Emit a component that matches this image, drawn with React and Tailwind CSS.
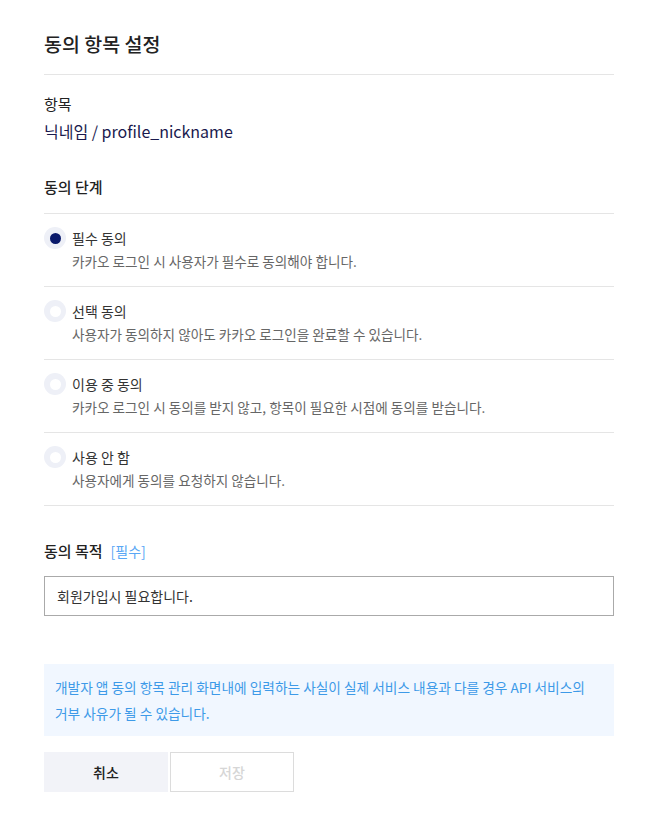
import React, { useState } from 'react';

const OPTIONS = [
  { key: 'required', label: '필수 동의', desc: '카카오 로그인 시 사용자가 필수로 동의해야 합니다.' },
  { key: 'optional', label: '선택 동의', desc: '사용자가 동의하지 않아도 카카오 로그인을 완료할 수 있습니다.' },
  { key: 'inuse', label: '이용 중 동의', desc: '카카오 로그인 시 동의를 받지 않고, 항목이 필요한 시점에 동의를 받습니다.' },
  { key: 'none', label: '사용 안 함', desc: '사용자에게 동의를 요청하지 않습니다.' },
];

function Radio({ checked }) {
  return (
    <span className="flex h-[22px] w-[22px] shrink-0 items-center justify-center rounded-full bg-[#eef0f7]">
      <span className={checked ? 'h-[11px] w-[11px] rounded-full bg-[#0a1a6b]' : 'h-[11px] w-[11px] rounded-full bg-white'} />
    </span>
  );
}

export default function App() {
  const [level, setLevel] = useState('required');
  const [purpose, setPurpose] = useState('회원가입시 필요합니다.');

  return (
    <div className="min-h-[836px] bg-white pl-[44px] pr-[46px] pt-[30px] text-[#222] font-['Noto_Sans_CJK_KR','Noto_Sans',sans-serif]">
      {/* Header */}
      <h1 className="text-[19.5px] font-medium leading-[28px] pb-[16px] border-b border-[#e5e5e5]">동의 항목 설정</h1>

      {/* Item */}
      <div className="pt-[18px]">
        <div className="text-[15px] leading-[22px]">항목</div>
        <div className="mt-[5px] text-[16px] leading-[22px] text-[#1a1a4e]">닉네임 / profile_nickname</div>
      </div>

      {/* Consent level */}
      <div className="mt-[34px] text-[15px] font-medium leading-[22px] pb-[15px] border-b border-[#e5e5e5]">동의 단계</div>
      <div>
        {OPTIONS.map((o) => (
          <label
            key={o.key}
            onClick={() => setLevel(o.key)}
            className="flex h-[73px] cursor-pointer gap-[6px] border-b border-[#e5e5e5] pt-[13px]"
          >
            <Radio checked={level === o.key} />
            <div>
              <div className="text-[14px] leading-[22px] text-[#333]">{o.label}</div>
              <div className="mt-[2px] text-[13.6px] leading-[20px] text-[#666]">{o.desc}</div>
            </div>
          </label>
        ))}
      </div>

      {/* Purpose */}
      <div className="mt-[34px] flex items-center gap-[8px] leading-[22px]">
        <span className="text-[15px] font-medium">동의 목적</span>
        <span className="text-[14px] text-[#5aa7f5]">[필수]</span>
      </div>
      <input
        value={purpose}
        onChange={(e) => setPurpose(e.target.value)}
        className="mt-[14px] h-[40px] w-full border border-[#aaa] px-[12px] text-[14px] text-[#333] outline-none"
      />

      {/* Notice */}
      <div className="mt-[48px] bg-[#f1f7ff] px-[11px] py-[10px] text-[13.7px] leading-[26px] text-[#3d9ae8]">
        개발자 앱 동의 항목 관리 화면내에 입력하는 사실이 실제 서비스 내용과 다를 경우 API 서비스의
        <br />
        거부 사유가 될 수 있습니다.
      </div>

      {/* Buttons */}
      <div className="mt-[16px] flex gap-[2px]">
        <button className="h-[40px] w-[124px] bg-[#f2f3f8] text-[14px] font-medium text-[#222]">취소</button>
        <button disabled className="h-[40px] w-[124px] border border-[#dcdcdc] bg-white text-[14px] font-medium text-[#d6d6d6]">
          저장
        </button>
      </div>
    </div>
  );
}
